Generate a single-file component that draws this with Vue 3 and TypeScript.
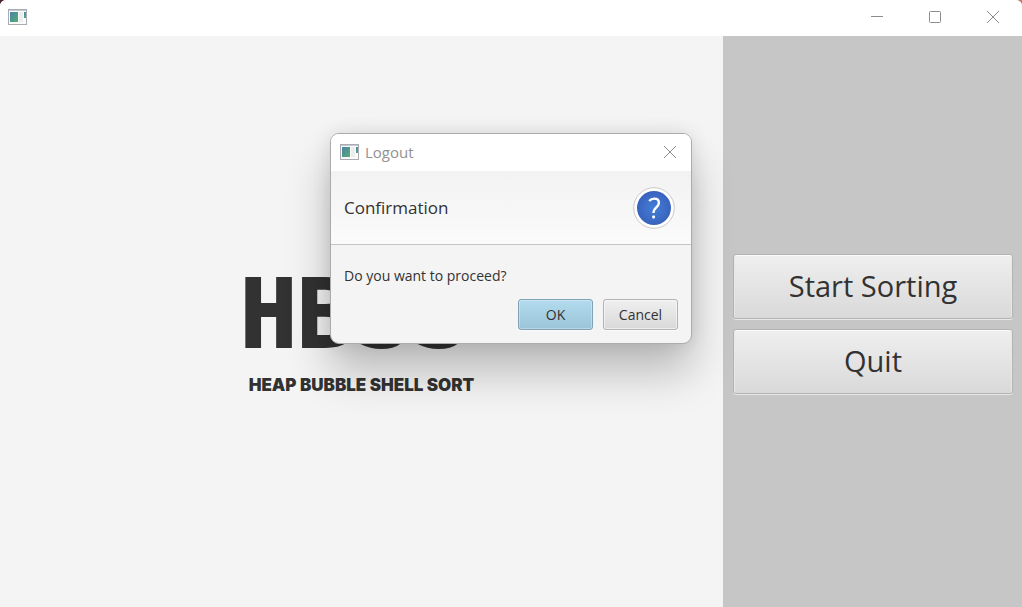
<script setup lang="ts">
import { ref } from 'vue'

interface Action {
  id: string
  label: string
}

const actions: Action[] = [
  { id: 'start', label: 'Start Sorting' },
  { id: 'quit', label: 'Quit' },
]
const dialogOpen = ref(true)

function run(id: string) {
  if (id === 'quit') dialogOpen.value = true
}
function close() {
  dialogOpen.value = false
}
</script>

<template>
  <div class="window">
    <header class="titlebar">
      <svg class="app-icon" viewBox="0 0 19 16" aria-hidden="true">
        <rect x="0.5" y="0.5" width="18" height="15" fill="#fbfbfc" stroke="#a9adb3" />
        <path d="M1 1.500h17" stroke="#c3cad2" />
        <rect x="2" y="3" width="8" height="10" fill="url(#pane)" />
        <rect x="11" y="3" width="4" height="10" fill="#eceded" />
        <rect x="16" y="3" width="2" height="6" fill="url(#pane)" />
        <defs>
          <linearGradient id="pane" x1="0" y1="0" x2="1" y2="1">
            <stop offset="0" stop-color="#4c83a8" />
            <stop offset="1" stop-color="#55ad72" />
          </linearGradient>
        </defs>
      </svg>
      <nav class="controls">
        <button type="button" aria-label="Minimize">
          <svg viewBox="0 0 14 14"><path d="M1 6.5h12" /></svg>
        </button>
        <button type="button" aria-label="Maximize">
          <svg viewBox="0 0 14 14"><rect x="1.5" y="1.5" width="11" height="11" rx="1" /></svg>
        </button>
        <button type="button" aria-label="Close">
          <svg viewBox="0 0 14 14"><path d="M1 1l12 12M13 1L1 13" /></svg>
        </button>
      </nav>
    </header>

    <div class="content">
      <main class="brand">
        <h1>HBSS</h1>
        <p>HEAP BUBBLE SHELL SORT</p>
      </main>
      <aside class="sidebar">
        <button v-for="a in actions" :key="a.id" type="button" class="action" @click="run(a.id)">
          {{ a.label }}
        </button>
      </aside>
    </div>

    <section v-if="dialogOpen" class="dialog" role="dialog" aria-labelledby="dialog-title">
      <div class="dialog-bar">
        <svg class="app-icon" viewBox="0 0 19 16" aria-hidden="true">
          <rect x="0.5" y="0.5" width="18" height="15" fill="#fbfbfc" stroke="#a9adb3" />
          <path d="M1 1.500h17" stroke="#c3cad2" />
          <rect x="2" y="3" width="8" height="10" fill="url(#pane)" />
          <rect x="11" y="3" width="4" height="10" fill="#eceded" />
          <rect x="16" y="3" width="2" height="6" fill="url(#pane)" />
        </svg>
        <span id="dialog-title" class="dialog-title">Logout</span>
        <button type="button" class="dialog-close" aria-label="Close dialog" @click="close">
          <svg viewBox="0 0 14 14"><path d="M1 1l12 12M13 1L1 13" /></svg>
        </button>
      </div>
      <div class="dialog-header">
        <h2>Confirmation</h2>
        <svg class="question" viewBox="0 0 42 42" aria-hidden="true">
          <defs>
            <radialGradient id="blue">
              <stop offset="0" stop-color="#4480d8" />
              <stop offset="1" stop-color="#3862bd" />
            </radialGradient>
          </defs>
          <circle cx="21" cy="21" r="20.3" fill="#fff" stroke="#c8c8c8" />
          <circle cx="21" cy="21" r="17" fill="url(#blue)" />
          <path d="M16.2 14C17.600 12.300 19.400 11.600 21.200 11.600c2.900 0 4.700 1.700 4.700 4.200 0 4.500-5.400 5.200-5.400 9.300v1" fill="none" stroke="#fff" stroke-width="2.400" />
          <rect x="19.200" y="28.600" width="2.800" height="2.800" rx="0.800" fill="#fff" />
        </svg>
      </div>
      <div class="dialog-body">
        <p>Do you want to proceed?</p>
        <div class="dialog-buttons">
          <button type="button" class="primary" @click="close">OK</button>
          <button type="button" @click="close">Cancel</button>
        </div>
      </div>
    </section>
  </div>
</template>

<style>
html {
  background: linear-gradient(90deg, #4a2530 50%, #c9775c 50%);
}
body {
  margin: 0;
}
</style>

<style scoped>
.window {
  position: relative;
  display: flex;
  flex-direction: column;
  min-height: 100vh;
  border-radius: 6px 6px 0 0;
  overflow: hidden;
  background: #f4f4f4;
  color: #323232;
  font-family: "Open Sans", "Noto Sans", sans-serif;
}
button {
  font-family: inherit;
  color: inherit;
  padding: 0;
}
.titlebar {
  display: flex;
  align-items: center;
  justify-content: space-between;
  height: 36px;
  padding: 0 0 2px 8px;
  box-sizing: border-box;
  background: #fff;
}
.app-icon {
  display: block;
  width: 19px;
  height: 16px;
}
.controls {
  display: flex;
}
.controls button {
  display: grid;
  place-items: center;
  width: 58px;
  height: 34px;
  border: 0;
  background: none;
}
.controls svg,
.dialog-close svg {
  display: block;
  width: 14px;
  height: 14px;
  fill: none;
  stroke: #8b8b8b;
}
.content {
  flex: 1;
  display: flex;
}
.brand {
  flex: 1;
  display: flex;
  flex-direction: column;
  align-items: center;
  justify-content: center;
  padding-top: 18px;
}
.brand h1 {
  margin: 0;
  padding-right: 14px;
  font-family: "DejaVu Sans Mono", monospace;
  font-size: 95px;
  line-height: 100px;
  font-weight: 700;
  -webkit-text-stroke: 2px #323232;
}
.brand p {
  margin: 9px 0 0;
  font-family: Inter, sans-serif;
  font-size: 17px;
  line-height: 24px;
  font-weight: 900;
}
.sidebar {
  width: 299px;
  box-sizing: border-box;
  padding: 4px 9px 0 10px;
  display: flex;
  flex-direction: column;
  justify-content: center;
  gap: 10px;
  background: #c6c6c6;
}
.action {
  height: 65px;
  border: 1px solid #b3b3b3;
  border-radius: 3px;
  background: linear-gradient(#efefef, #d9d9d9);
  box-shadow: 0 1px 0 #e8e8e8, inset 0 1px 0 #fafafa, inset 1px 0 0 #e9e9e9, inset -1px 0 0 #e9e9e9;
  font-size: 29px;
  line-height: 40px;
}
.dialog {
  position: absolute;
  top: 133px;
  left: 50%;
  width: 362px;
  box-sizing: border-box;
  margin-left: -181px;
  border: 1px solid #ababab;
  border-radius: 9px;
  overflow: hidden;
  background: #f4f4f4;
  box-shadow: 0 28px 44px rgba(0, 0, 0, 0.24), 0 0 18px rgba(0, 0, 0, 0.1);
}
.dialog-bar {
  display: flex;
  align-items: center;
  gap: 6px;
  height: 37px;
  padding: 0 0 2px 9px;
  box-sizing: border-box;
  background: #fff;
}
.dialog-title {
  flex: 1;
  color: #929292;
  font-size: 15px;
  line-height: 20px;
}
.dialog-close {
  display: grid;
  place-items: center;
  width: 42px;
  height: 34px;
  border: 0;
  background: none;
}
.dialog-header {
  display: flex;
  align-items: center;
  justify-content: space-between;
  height: 73px;
  padding: 0 16px 0 13px;
  border-bottom: 1px solid #c4c4c4;
  background: linear-gradient(#f2f2f2, #fbfbfb);
}
.dialog-header h2 {
  margin: 0;
  font-size: 17px;
  line-height: 24px;
  font-weight: 400;
}
.question {
  width: 42px;
  height: 42px;
}
.dialog-body {
  padding: 20px 13px 13px;
}
.dialog-body p {
  margin: 0;
  font-size: 14px;
  line-height: 22px;
}
.dialog-buttons {
  display: flex;
  justify-content: flex-end;
  gap: 10px;
  margin-top: 12px;
}
.dialog-buttons button {
  width: 75px;
  height: 31px;
  border: 1px solid #b3b3b3;
  border-radius: 3px;
  background: linear-gradient(#efefef, #d9d9d9);
  box-shadow: 0 1px 0 #fafafa, inset 0 0 0 1px rgba(255, 255, 255, 0.5);
  font-size: 14px;
  line-height: 20px;
}
.dialog-buttons .primary {
  border-color: #7fa3b5;
  background: linear-gradient(#b3dbee, #9cc4d8);
  box-shadow: 0 1px 0 #fafafa, inset 0 0 0 1px rgba(255, 255, 255, 0.3);
}
</style>
